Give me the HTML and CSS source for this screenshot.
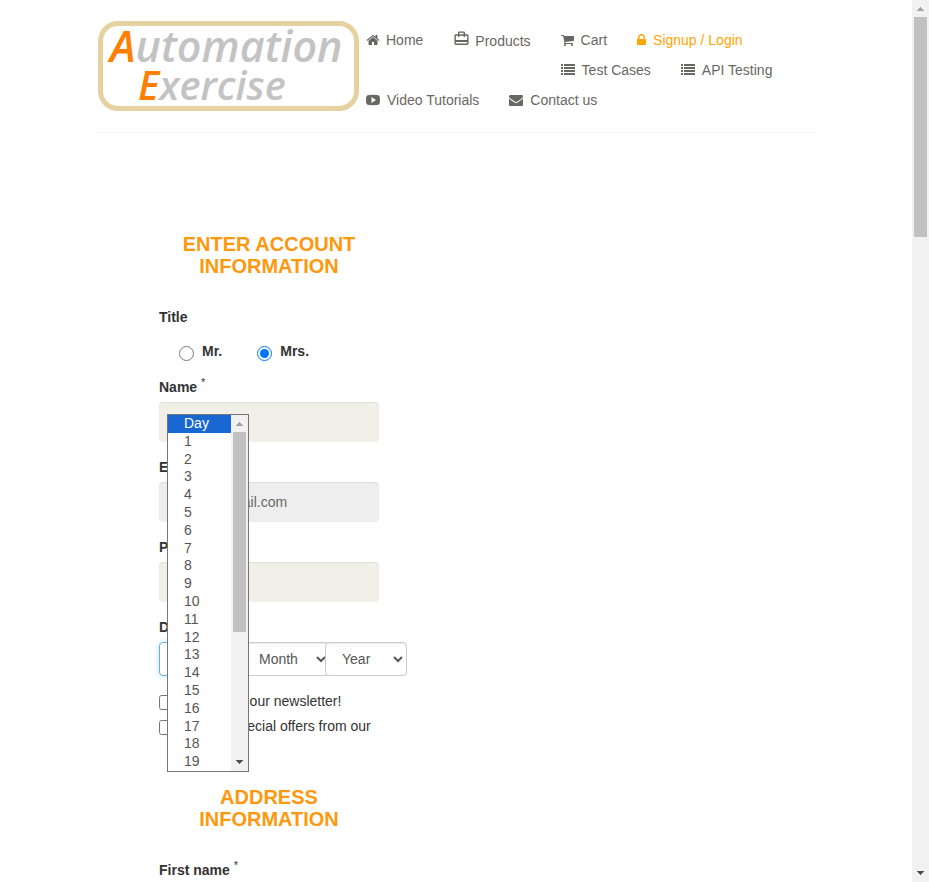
FILE: index.html
```html
<!DOCTYPE html>
<html lang="en">
<head>
<meta charset="utf-8">
<meta name="viewport" content="width=device-width, initial-scale=1">
<title>Automation Exercise - Signup</title>
<link rel="stylesheet" href="styles.css">
</head>
<body>
<div class="viewport">
  <div class="page">
    <header class="container header">
      <a class="logo" href="#" aria-label="Automation Exercise">
        <span class="logo-line"><span class="logo-cap">A</span>utomation</span>
        <span class="logo-line logo-second"><span class="logo-cap">E</span>xercise</span>
      </a>
      <nav class="menu">
        <ul>
          <li><a href="#"><svg class="icon" viewBox="0 0 1792 1792"><path d="M1472 992v480q0 26-19 45t-45 19h-384v-384h-256v384h-384q-26 0-45-19t-19-45v-480q0-1 .5-3t.5-3l575-474 575 474q1 2 1 6zm223-69l-62 74q-8 9-21 11h-3q-13 0-21-7l-692-577-692 577q-12 8-24 7-13-2-21-11l-62-74q-8-10-7-23.500t11-21.500l719-599q32-26 76-26t76 26l244 204v-195q0-14 9-23t23-9h192q14 0 23 9t9 23v408l219 182q10 8 11 21.500t-7 23.500z"/></svg>Home</a></li>
          <li class="tall"><a href="#"><svg class="icon icon-travel" viewBox="0 0 24 24"><path d="M20 6h-3V4c0-1.110-.89-2-2-2H9c-1.110 0-2 .89-2 2v2H4c-1.110 0-2 .89-2 2v11c0 1.110.89 2 2 2h16c1.110 0 2-.89 2-2V8c0-1.110-.89-2-2-2zM9 4h6v2H9V4zm11 15H4v-2h16v2zm0-5H4V8h3v2h2V8h6v2h2V8h3v6z"/></svg>Products</a></li>
          <li><a href="#"><svg class="icon" viewBox="64 0 1792 1792"><path d="M704 1536q0 52-38 90t-90 38-90-38-38-90 38-90 90-38 90 38 38 90zm896 0q0 52-38 90t-90 38-90-38-38-90 38-90 90-38 90 38 38 90zm128-1088v512q0 24-16.500 42.500t-40.500 21.500l-1044 122q13 60 13 70 0 16-24 64h920q26 0 45 19t19 45-19 45-45 19h-1024q-26 0-45-19t-19-45q0-11 8-31.500t16-36 21.500-40 15.500-29.500l-177-823h-204q-26 0-45-19t-19-45 19-45 45-19h256q16 0 28.500 6.500t19.500 15.500 13 24.500 8 26 5.500 29.500 4.500 26h1201q26 0 45 19t19 45z"/></svg>Cart</a></li>
          <li><a class="active" href="#"><svg class="icon icon-lock" viewBox="320 0 1152 1792"><path d="M640 768h512v-192q0-106-75-181t-181-75-181 75-75 181v192zm832 96v576q0 40-28 68t-68 28h-960q-40 0-68-28t-28-68v-576q0-40 28-68t68-28h32v-192q0-184 132-316t316-132 316 132 132 316v192h32q40 0 68 28t28 68z"/></svg>Signup / Login</a></li>
          <li><a href="#"><svg class="icon icon-wide" viewBox="0 0 14 14"><path d="M0 1h2v2H0zM3 1h11v2H3zM0 4h2v2H0zM3 4h11v2H3zM0 7h2v2H0zM3 7h11v2H3zM0 10h2v2H0zM3 10h11v2H3z"/></svg>Test Cases</a></li>
          <li><a href="#"><svg class="icon icon-wide" viewBox="0 0 14 14"><path d="M0 1h2v2H0zM3 1h11v2H3zM0 4h2v2H0zM3 4h11v2H3zM0 7h2v2H0zM3 7h11v2H3zM0 10h2v2H0zM3 10h11v2H3z"/></svg>API Testing</a></li>
          <li><a href="#"><svg class="icon icon-wide" viewBox="0 0 14 14"><path fill-rule="evenodd" d="M3 2Q7 1.700 11 2Q13.600 2 13.800 4Q14.100 7 13.800 10Q13.600 12 11 12Q7 12.300 3 12Q.4 12 .2 10Q-.1 7 .2 4Q.4 2 3 2zM5.500 4v6L10 7z"/></svg>Video Tutorials</a></li>
          <li><a href="#"><svg class="icon icon-wide" viewBox="0 0 1792 1792"><path d="M1792 710v794q0 66-47 113t-113 47h-1472q-66 0-113-47t-47-113v-794q44 49 101 87 362 246 497 345 57 42 92.500 65.500t94.500 48 110 24.500h2q51 0 110-24.500t94.500-48 92.500-65.500q170-123 498-345 57-39 100-87zm0-294q0 79-49 151t-122 123q-376 261-468 325-10 7-42.500 31t-54 38.500-52 32.500-57.500 27-50 9h-2q-23 0-50-9t-57.500-27-52-32.500-54-38.500-42.500-31q-91-64-262-182.500t-205-142.500q-62-42-117-115.500t-55-136.500q0-78 41.500-130t118.500-52h1472q65 0 112.500 47t47.500 113z"/></svg>Contact us</a></li>
        </ul>
      </nav>
    </header>

    <main class="container">
      <form class="account">
        <h2>Enter Account Information</h2>
        <fieldset class="titles">
          <legend>Title</legend>
          <div class="radios">
            <label for="mr"><input type="radio" id="mr" name="title">Mr.</label>
            <label for="mrs"><input type="radio" id="mrs" name="title" checked>Mrs.</label>
          </div>
        </fieldset>
        <div class="field">
          <label for="name">Name <sup>*</sup></label>
          <input type="text" id="name">
        </div>
        <div class="field">
          <label for="email">Email <sup>*</sup></label>
          <input type="text" id="email" value="test12@gmail.com" disabled>
        </div>
        <div class="field">
          <label for="password">Password <sup>*</sup></label>
          <input type="password" id="password">
        </div>
        <div class="field">
          <label for="day">Date of Birth</label>
          <div class="dates">
            <select id="day" class="open"><option>Day</option></select>
            <select aria-label="Month" class="month"><option>Month</option></select>
            <select aria-label="Year"><option>Year</option></select>
            <div class="popup">
              <ul role="listbox" aria-label="Day">
                <li role="option" aria-selected="true">Day</li>
                <li role="option">1</li>
                <li role="option">2</li>
                <li role="option">3</li>
                <li role="option">4</li>
                <li role="option">5</li>
                <li role="option">6</li>
                <li role="option">7</li>
                <li role="option">8</li>
                <li role="option">9</li>
                <li role="option">10</li>
                <li role="option">11</li>
                <li role="option">12</li>
                <li role="option">13</li>
                <li role="option">14</li>
                <li role="option">15</li>
                <li role="option">16</li>
                <li role="option">17</li>
                <li role="option">18</li>
                <li role="option">19</li>
              </ul>
              <div class="scrollbar">
                <svg class="arrow arrow-up" viewBox="0 0 17 17"><path d="M5 11h7v-1h-1v-1h-1v-1h-1v-1h-1v1h-1v1h-1v1h-1z"/></svg>
                <div class="track"><div class="thumb thumb-list"></div></div>
                <svg class="arrow" viewBox="0 0 17 17"><path d="M5 6h7v1h-1v1h-1v1h-1v1h-1v-1h-1v-1h-1v-1h-1z"/></svg>
              </div>
            </div>
          </div>
        </div>
        <div class="check"><input type="checkbox" id="news"><label for="news">Sign up for our newsletter!</label></div>
        <div class="check"><input type="checkbox" id="offers"><label for="offers">Receive special offers from our partners!</label></div>
        <h2 class="address">Address Information</h2>
        <div class="field">
          <label for="first">First name <sup>*</sup></label>
          <input type="text" id="first">
        </div>
      </form>
    </main>
  </div>
  <div class="scrollbar">
    <svg class="arrow arrow-up" viewBox="0 0 17 17"><path d="M5 11h7v-1h-1v-1h-1v-1h-1v-1h-1v1h-1v1h-1v1h-1z"/></svg>
    <div class="track"><div class="thumb thumb-page"></div></div>
    <svg class="arrow" viewBox="0 0 17 17"><path d="M5 6h7v1h-1v1h-1v1h-1v1h-1v-1h-1v-1h-1v-1h-1z"/></svg>
  </div>
</div>
</body>
</html>
```
FILE: styles.css
```css
* {
  box-sizing: border-box;
}

body {
  margin: 0;
  background: #fff;
  color: #333;
  font: 14px/20px "Liberation Sans", Arial, sans-serif;
}

ul {
  margin: 0;
  padding: 0;
  list-style: none;
}

.viewport {
  display: flex;
  height: 100vh;
}

.page {
  flex: 1;
  min-width: 0;
  overflow: hidden;
}

.container {
  width: 100%;
  max-width: 720px;
  margin: 0 auto;
}

/* Header */
.header {
  display: flex;
  align-items: flex-start;
  padding: 21px 0 17px;
  border-bottom: 1px solid #f5f5f5;
}

.logo {
  flex: none;
  width: 261px;
  height: 90px;
  margin-left: 2px;
  padding: 0 7px;
  border: 5px solid #e6d1a1;
  border-radius: 20px;
  color: #c3c3c3;
  font: italic 600 43px/39px "Open Sans", "Noto Sans", sans-serif;
  text-decoration: none;
  white-space: nowrap;
}

.logo-line {
  display: block;
}

.logo-second {
  padding-left: 28px;
  font-size: 40px;
}

.logo-cap {
  color: #ff7f00;
}

.menu {
  flex: 1;
  margin: 4px 0 0 -8px;
}

.menu li {
  float: left;
  height: 30px;
  padding: 0 15px;
}

.menu li.tall {
  height: 31px;
}

.menu a {
  display: flex;
  align-items: center;
  height: 30px;
  color: #696763;
  text-decoration: none;
}

.menu .tall a {
  height: 32px;
}

.menu a.active {
  color: orange;
}

.icon {
  width: 14px;
  height: 14px;
  margin-right: 6px;
  fill: currentColor;
}

.icon-wide {
  margin-right: 7px;
}

.icon-lock {
  width: 9px;
  margin-right: 7px;
}

.icon-travel {
  width: 17px;
  height: 17px;
  margin: 0 5px 5px 0;
}

/* Account form */
.account {
  width: 220px;
  margin: 100px 0 0 63px;
}

h2 {
  margin: 0 0 30px;
  color: #fe980f;
  font-size: 20px;
  line-height: 22px;
  text-align: center;
  text-transform: uppercase;
}

.address {
  margin-top: 30px;
}

.titles {
  margin: 0 0 16px;
  padding: 0;
  border: 0;
}

legend {
  padding: 0;
  font-weight: bold;
}

.radios {
  display: flex;
  gap: 35px;
  padding: 14px 20px 0;
}

.radios label {
  display: flex;
  font-weight: bold;
}

.radios input {
  width: 15px;
  height: 15px;
  margin: 5px 8px 0 0;
}

.field {
  margin-bottom: 15px;
}

.field > label {
  display: block;
  margin-bottom: 5px;
  font-weight: bold;
}

sup {
  font-size: 11px;
  font-weight: normal;
  line-height: 0;
}

.field > input {
  display: block;
  width: 100%;
  height: 40px;
  padding: 6px 12px;
  border: 0;
  border-radius: 4px;
  background: #f0f0e9;
  box-shadow: inset 0 1px 1px rgba(0, 0, 0, 0.075);
  color: #696763;
  font: inherit;
}

.field > input:disabled {
  background: #eee;
}

.dates {
  position: relative;
  display: flex;
  width: 248px;
}

select {
  width: 82px;
  height: 34px;
  padding: 6px 12px;
  border: 1px solid #ccc;
  border-radius: 4px;
  background: #fff;
  box-shadow: inset 0 1px 1px rgba(0, 0, 0, 0.075);
  color: #555;
  font: inherit;
}

.dates .open {
  width: 83px;
  border-color: #66afe9;
  box-shadow: 0 0 6px rgba(102, 175, 233, 0.4);
}

.dates .month {
  flex: none;
  width: 88px;
  margin-right: -5px;
}

.popup {
  position: absolute;
  bottom: -96px;
  left: 8px;
  display: flex;
  width: 82px;
  height: 358px;
  border: 1px solid #767676;
  background: #fff;
}

.popup ul {
  display: grid;
  flex: 1;
  grid-auto-rows: 1fr;
}

.popup li {
  padding-left: 16px;
  color: #555;
  line-height: 17px;
}

.popup li[aria-selected] {
  background: #1967d2;
  color: #fff;
}

.check {
  display: flex;
  margin-bottom: 5px;
}

.check input {
  flex: none;
  width: 15px;
  height: 15px;
  margin: 4px 4px 0 0;
}

/* Scroll bars */
.scrollbar {
  display: flex;
  flex: none;
  flex-direction: column;
  width: 17px;
  background: #f1f1f1;
}

.arrow {
  width: 17px;
  height: 17px;
  fill: #505050;
}

.arrow-up {
  fill: #a3a3a3;
}

.track {
  flex: 1;
  padding: 0 2px;
}

.thumb {
  background: #c1c1c1;
}

.thumb-page {
  height: 26%;
}

.thumb-list {
  height: 62%;
}
```
